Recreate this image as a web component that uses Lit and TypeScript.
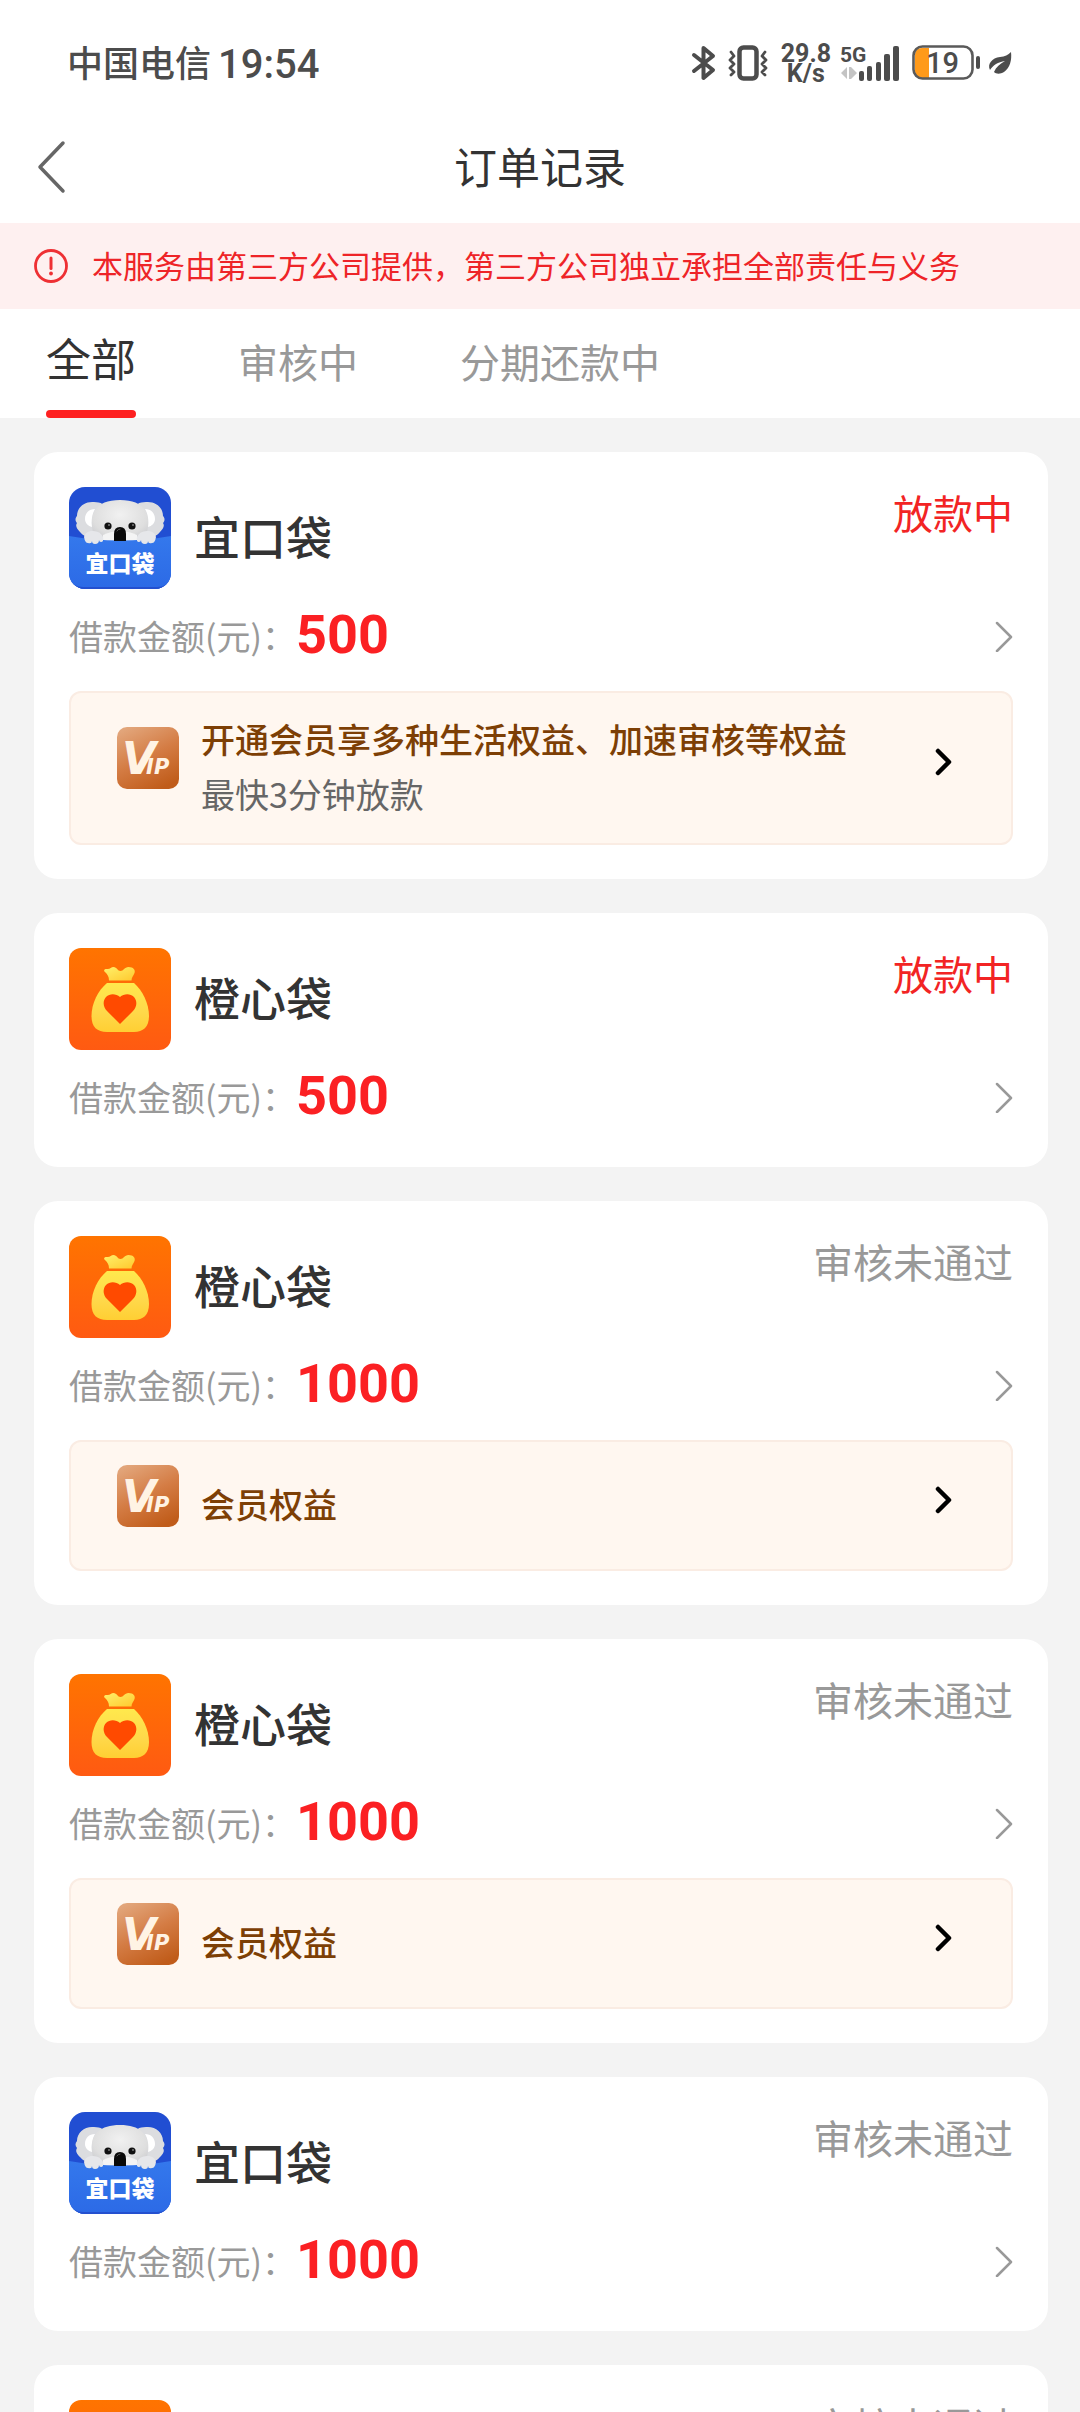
import { LitElement, html, svg, css, nothing } from "lit";
import { customElement, property, state } from "lit/decorators.js";
import { classMap } from "lit/directives/class-map.js";

type Brand = "koala" | "orange";

interface Order {
  brand: Brand;
  name: string;
  status: string;
  active: boolean;
  amount: number;
  vipTitle?: string;
  vipNote?: string;
}

const ORDERS: Order[] = [
  {
    brand: "koala",
    name: "宜口袋",
    status: "放款中",
    active: true,
    amount: 500,
    vipTitle: "开通会员享多种生活权益、加速审核等权益",
    vipNote: "最快3分钟放款",
  },
  { brand: "orange", name: "橙心袋", status: "放款中", active: true, amount: 500 },
  { brand: "orange", name: "橙心袋", status: "审核未通过", active: false, amount: 1000, vipTitle: "会员权益" },
  { brand: "orange", name: "橙心袋", status: "审核未通过", active: false, amount: 1000, vipTitle: "会员权益" },
  { brand: "koala", name: "宜口袋", status: "审核未通过", active: false, amount: 1000 },
  { brand: "orange", name: "橙心袋", status: "审核未通过", active: false, amount: 1000 },
];

const TABS = ["全部", "审核中", "分期还款中"];

const koalaLogo = svg`
  <defs>
    <clipPath id="tile"><rect width="102" height="102" rx="16" /></clipPath>
    <radialGradient id="fur" cx="0.5" cy="0.35" r="0.7">
      <stop offset="0" stop-color="#f1f1f1" />
      <stop offset="0.7" stop-color="#dedede" />
      <stop offset="1" stop-color="#c9cace" />
    </radialGradient>
    <linearGradient id="pocket" x1="0" y1="0" x2="0" y2="1">
      <stop offset="0" stop-color="#3478ec" />
      <stop offset="1" stop-color="#2c6ae6" />
    </linearGradient>
  </defs>
  <g clip-path="url(#tile)">
    <rect width="102" height="102" fill="#214ed2" />
    <path d="M8 29c0-9 8-15 17-14 7 0 11 3 13 6l-6 27c-8 4-17 3-21-3-3-3-5-6-3-9-2-2-2-5 0-7z" fill="#dcdde0" />
    <path d="M94 29c0-9-8-15-17-14-7 0-11 3-13 6l6 27c8 4 17 3 21-3 3-3 5-6 3-9 2-2 2-5 0-7z" fill="#dcdde0" />
    <path d="M16 32c0-6 4-10 10-10-3 5-4 12-3 18-4-1-7-4-7-8z" fill="#fff" />
    <path d="M86 32c0-6-4-10-10-10 3 5 4 12 3 18 4-1 7-4 7-8z" fill="#fff" />
    <path d="M23 38c-1-16 8-25 28-25s29 9 28 25c0 7-3 12-8 17H31c-5-5-8-10-8-17z" fill="url(#fur)" />
    <path d="M34 48q17-8 34 0v8H34z" fill="#f4f4f4" />
    <path d="M0 49q51 9 102 0v53H0z" fill="url(#pocket)" />
    <path d="M0 92q4 8 14 8h74q10 0 14-8v10H0z" fill="#2450cf" />
    <circle cx="39" cy="39" r="3.6" fill="#111" />
    <circle cx="63" cy="39" r="3.6" fill="#111" />
    <circle cx="40" cy="38" r="1" fill="#777" />
    <circle cx="64" cy="38" r="1" fill="#777" />
    <path d="M45 47q0-7 6-7t6 7v7H45z" fill="#0a0a0a" />
    <path d="M48 44q1-2 3-2" stroke="#555" fill="none" stroke-linecap="round" />
    <path d="M15 50q1-5 7-6 9-1 12 6 1 5-2 5-2 0-2-2 0 4-4 4-3 0-3-3 0 3-4 2-3 0-4-6z" fill="#e6e7ea" />
    <path d="M87 50q-1-5-7-6-9-1-12 6-1 5 2 5 2 0 2-2 0 4 4 4 3 0 3-3 0 3 4 2 3 0 4-6z" fill="#e6e7ea" />
    <text x="51" y="85" text-anchor="middle" font-family="'Noto Sans CJK SC', sans-serif" font-weight="900"
      font-size="23" fill="#fff">宜口袋</text>
  </g>`;

const orangeLogo = svg`
  <defs>
    <linearGradient id="tile" x1="0" y1="0" x2="0" y2="1">
      <stop offset="0" stop-color="#ff7400" />
      <stop offset="1" stop-color="#ff5a12" />
    </linearGradient>
    <linearGradient id="neck" x1="0" y1="0" x2="1" y2="1">
      <stop offset="0" stop-color="#fff06a" />
      <stop offset="1" stop-color="#ffc92e" />
    </linearGradient>
    <linearGradient id="bag" x1="0" y1="0" x2="0" y2="1">
      <stop offset="0" stop-color="#ffe94d" />
      <stop offset="0.6" stop-color="#ffd84a" />
      <stop offset="1" stop-color="#ffcf33" />
    </linearGradient>
  </defs>
  <rect width="102" height="102" rx="12" fill="url(#tile)" />
  <path d="M40 32.500c0-4-1.500-6-4-8.500-2-2 0-3.500 2-3 3 .5 4-2 6.500-2 3.500 0 4 4 7 4s4-4 8-4c5 0 7 3 6 6-.8 2.500-3 4-3 7.500z"
    fill="url(#neck)" />
  <path d="M38 35h27c8 7 15 20 15 33 0 11-6 16-15 16H38c-10 0-15.500-5-15.500-16 0-13 7-26 15.500-33z" fill="url(#bag)" />
  <path d="M51 76 38 63c-4-4-4.500-10-1-14 4-4 10-3.500 14 0 4-3.500 10-4 14 0 3.500 4 3 10-1 14z" fill="#ff4a00" />`;

@customElement("order-card")
class OrderCard extends LitElement {
  @property({ attribute: false }) order!: Order;

  static styles = css`
    :host {
      display: block;
      flex: none;
      padding: 35px 35px 34px;
      border-radius: 24px;
      background: #fff;
    }
    .head {
      display: flex;
      align-items: center;
    }
    .logo {
      flex: none;
      width: 102px;
      height: 102px;
    }
    .name {
      flex: 1;
      margin: 0 0 0 23px;
      padding-bottom: 6px;
      font-size: 46px;
      font-weight: 500;
      line-height: 64px;
      color: #333;
    }
    .status {
      align-self: flex-start;
      font-size: 40px;
      line-height: 50px;
      color: #999;
    }
    .status.active {
      color: #f22424;
    }
    .amount {
      display: flex;
      align-items: center;
      padding-top: 11px;
      line-height: 72px;
      color: inherit;
      text-decoration: none;
    }
    .label {
      font-size: 34px;
      color: #999;
    }
    .value {
      flex: 1;
      padding-bottom: 2px;
      line-height: 70px;
      font-family: Roboto, sans-serif;
      font-size: 54px;
      font-weight: 700;
      color: #fb2023;
    }
    .more {
      flex: none;
      width: 20px;
      height: 32px;
    }
    .vip {
      box-sizing: border-box;
      display: flex;
      align-items: center;
      min-height: 131px;
      margin-top: 19px;
      padding: 18px 58px 22px 46px;
      border: 2px solid #faece3;
      border-radius: 12px;
      background: #fff7f0;
      color: inherit;
      text-decoration: none;
    }
    .badge {
      flex: none;
      width: 62px;
      height: 62px;
      margin-bottom: 16px;
    }
    .lines {
      flex: 1;
      margin-left: 22px;
      font-size: 34px;
      line-height: 55px;
    }
    .lines p {
      margin: 0;
    }
    .title {
      font-weight: 500;
      color: #7d3f05;
    }
    .note {
      color: #666;
    }
    .go {
      flex: none;
      width: 18px;
      height: 28px;
      margin-bottom: 8px;
    }
  `;

  private renderVip(title: string, note?: string) {
    return html`
      <a class="vip" href="#vip">
        <svg class="badge" viewBox="0 0 62 62" role="img" aria-label="VIP">
          <defs>
            <linearGradient id="copper" x1="0.200" y1="0" x2="0.700" y2="1">
              <stop offset="0" stop-color="#e2a57a" />
              <stop offset="0.500" stop-color="#d47c44" />
              <stop offset="1" stop-color="#c05c1a" />
            </linearGradient>
          </defs>
          <rect width="62" height="62" rx="10" fill="url(#copper)" />
          <text x="5" y="47" fill="#fff3e4" font-family="'DejaVu Sans', sans-serif" font-weight="700"
            font-style="italic" font-size="44">V<tspan dx="-10" font-size="21">IP</tspan></text>
        </svg>
        <div class="lines">
          <p class="title">${title}</p>
          ${note ? html`<p class="note">${note}</p>` : nothing}
        </div>
        <svg class="go" viewBox="0 0 18 28" aria-hidden="true">
          <path d="M3 3l11 11L3 25" fill="none" stroke="#000" stroke-width="4.500" stroke-linecap="round" stroke-linejoin="round" />
        </svg>
      </a>
    `;
  }

  render() {
    const { brand, name, status, active, amount, vipTitle, vipNote } = this.order;
    return html`
      <div class="head">
        <svg class="logo" viewBox="0 0 102 102" aria-hidden="true">${brand === "koala" ? koalaLogo : orangeLogo}</svg>
        <h2 class="name">${name}</h2>
        <span class=${classMap({ status: true, active })}>${status}</span>
      </div>
      <a class="amount" href="#order">
        <span class="label">借款金额(元)：</span>
        <span class="value">${amount}</span>
        <svg class="more" viewBox="0 0 20 32" aria-hidden="true">
          <path d="M4 3l14 14L4 31" fill="none" stroke="#999" stroke-width="2.500" stroke-linecap="round" stroke-linejoin="round" />
        </svg>
      </a>
      ${vipTitle ? this.renderVip(vipTitle, vipNote) : nothing}
    `;
  }
}

@customElement("status-bar")
class StatusBar extends LitElement {
  static styles = css`
    :host {
      display: flex;
      align-items: center;
      height: 94px;
      padding: 16px 68px 0 67px;
      color: #4c4c4c;
      font-family: Roboto, "Noto Sans CJK SC", sans-serif;
    }
    svg {
      display: block;
      flex: none;
      overflow: visible;
    }
    .carrier {
      padding-top: 3px;
      font-size: 36px;
      font-weight: 500;
      line-height: 40px;
    }
    .time {
      flex: 1;
      margin-left: 7px;
      padding-top: 3px;
      font-size: 40px;
      font-weight: 500;
      line-height: 40px;
    }
    .vibrate {
      margin-left: 12px;
    }
    .speed {
      margin-left: 13px;
      padding-top: 2px;
      font-size: 25px;
      font-weight: 700;
      line-height: 20px;
      text-align: center;
    }
    .signal {
      margin-left: 10px;
    }
    .battery {
      margin-left: 13px;
    }
    .leaf {
      margin-left: 7px;
    }
  `;

  render() {
    return html`
      <span class="carrier">中国电信</span>
      <span class="time">19:54</span>
      <svg width="24" height="36" viewBox="0 0 24 36" aria-hidden="true">
        <path d="M2 10l19 15-9.500 8V3L21 11 2 26" fill="none" stroke="#4c4c4c" stroke-width="4" stroke-linecap="round" stroke-linejoin="round" />
      </svg>
      <svg class="vibrate" width="40" height="36" viewBox="0 0 40 36" aria-hidden="true">
        <g fill="none" stroke="#4c4c4c" stroke-linecap="round" stroke-linejoin="round">
          <rect x="11.500" y="2.500" width="17" height="31" rx="4" stroke-width="4.500" />
          <path d="M3 7l3 4-4 4 4 4-4 4 4 4-3 3M37 7l-3 4 4 4-4 4 4 4-4 4 3 3" stroke-width="2.800" />
        </g>
      </svg>
      <div class="speed">29.8<br />K/s</div>
      <svg class="signal" width="58" height="36" viewBox="0 0 58 36" role="img" aria-label="5G">
        <text x="-1" y="17" font-family="Roboto, sans-serif" font-size="21" font-weight="700" fill="#4c4c4c">5G</text>
        <path d="M0 28l6-6v12zM8 22v12h2V22zM16 28l-6-6v12z" fill="#c4c4c4" />
        <g fill="#4c4c4c">
          <rect x="18" y="26" width="5" height="10" rx="2" />
          <rect x="26" y="21" width="5" height="15" rx="2" />
          <rect x="35" y="17" width="5" height="19" rx="2" />
          <rect x="43" y="9" width="6" height="27" rx="2" />
          <rect x="52" y="1" width="6" height="35" rx="2" />
        </g>
      </svg>
      <svg class="battery" width="69" height="36" viewBox="0 0 69 36" role="img" aria-label="19%">
        <path d="M10 3h7v30h-7q-7 0-7-7V10q0-7 7-7z" fill="#ff9a1a" />
        <rect x="1.500" y="1.500" width="59" height="32" rx="9" fill="none" stroke="#5a5a5a" stroke-width="2.600" />
        <rect x="64" y="11" width="4" height="13" rx="2" fill="#4c4c4c" />
        <text x="14" y="28" font-family="Roboto, sans-serif" font-size="29" font-weight="500" fill="#4c4c4c">19</text>
      </svg>
      <svg class="leaf" width="24" height="24" viewBox="0 0 24 24" aria-hidden="true">
        <path d="M23 1c1 8-1 16-7 20-4 2.500-8 2-10 0 2-5 6-8 11-11C10 11 5 14 2 19-1 13 4 7 12 6 17 5.500 20 4 23 1z" fill="#4c4c4c" />
      </svg>
    `;
  }
}

@customElement("app-root")
class AppRoot extends LitElement {
  @state() private current = 0;

  static styles = css`
    :host {
      display: flex;
      flex-direction: column;
      height: 100vh;
      overflow: hidden;
      background: #f3f3f3;
      color: #333;
      font-family: "Noto Sans CJK SC", sans-serif;
    }
    button {
      margin: 0;
      padding: 0;
      border: 0;
      background: none;
      color: inherit;
      font: inherit;
    }
    header,
    nav {
      flex: none;
      background: #fff;
    }
    .bar {
      display: grid;
      grid-template-columns: 1fr auto 1fr;
      align-items: center;
      height: 113px;
      padding: 0 35px;
    }
    .back {
      justify-self: start;
    }
    .back svg {
      display: block;
      width: 34px;
      height: 54px;
    }
    h1 {
      margin: 0;
      padding-bottom: 4px;
      font-size: 43px;
      font-weight: 400;
      line-height: 60px;
    }
    .notice {
      flex: none;
      display: flex;
      align-items: center;
      gap: 23px;
      padding: 20px 33px;
      background: #fef0f0;
      color: #ee2428;
      font-size: 31px;
      line-height: 46px;
    }
    .notice svg {
      flex: none;
      width: 36px;
      height: 36px;
    }
    .notice p {
      margin: 0;
      padding-bottom: 2px;
      line-height: 44px;
      white-space: nowrap;
    }
    nav {
      display: flex;
      align-items: stretch;
      gap: 102px;
      padding: 0 46px;
    }
    .tab {
      display: flex;
      flex-direction: column;
      justify-content: space-between;
      height: 109px;
      padding-top: 2px;
      font-size: 40px;
      line-height: 100px;
      color: #999;
    }
    .tab.on {
      padding-top: 0;
      font-size: 45px;
      line-height: 98px;
      color: #333;
    }
    .tab.on::after {
      content: "";
      display: block;
      width: 100%;
      height: 8px;
      border-radius: 4px;
      background: #fe2020;
    }
    main {
      flex: 1;
      min-height: 0;
      display: flex;
      flex-direction: column;
      gap: 34px;
      padding: 34px 32px 34px 34px;
      overflow-y: auto;
      scrollbar-width: none;
    }
  `;

  render() {
    return html`
      <header>
        <status-bar></status-bar>
        <div class="bar">
          <button class="back" aria-label="返回">
            <svg viewBox="0 0 34 54" aria-hidden="true">
              <path d="M28 3L5 27l23 24" fill="none" stroke="#666" stroke-width="3.500" stroke-linecap="round" stroke-linejoin="round" />
            </svg>
          </button>
          <h1>订单记录</h1>
        </div>
      </header>
      <div class="notice" role="note">
        <svg viewBox="0 0 36 36" aria-hidden="true">
          <circle cx="18" cy="18" r="15.500" fill="none" stroke="#ee3034" stroke-width="2.800" />
          <path d="M18 10v10.500" stroke="#ee3034" stroke-width="3" stroke-linecap="round" />
          <circle cx="18" cy="25.500" r="1.900" fill="#ee3034" />
        </svg>
        <p>本服务由第三方公司提供，第三方公司独立承担全部责任与义务</p>
      </div>
      <nav role="tablist">
        ${TABS.map(
          (label, i) => html`
            <button
              role="tab"
              aria-selected=${i === this.current ? "true" : "false"}
              class=${classMap({ tab: true, on: i === this.current })}
              @click=${() => (this.current = i)}
            >
              ${label}
            </button>
          `,
        )}
      </nav>
      <main>${ORDERS.map((order) => html`<order-card .order=${order}></order-card>`)}</main>
    `;
  }
}
